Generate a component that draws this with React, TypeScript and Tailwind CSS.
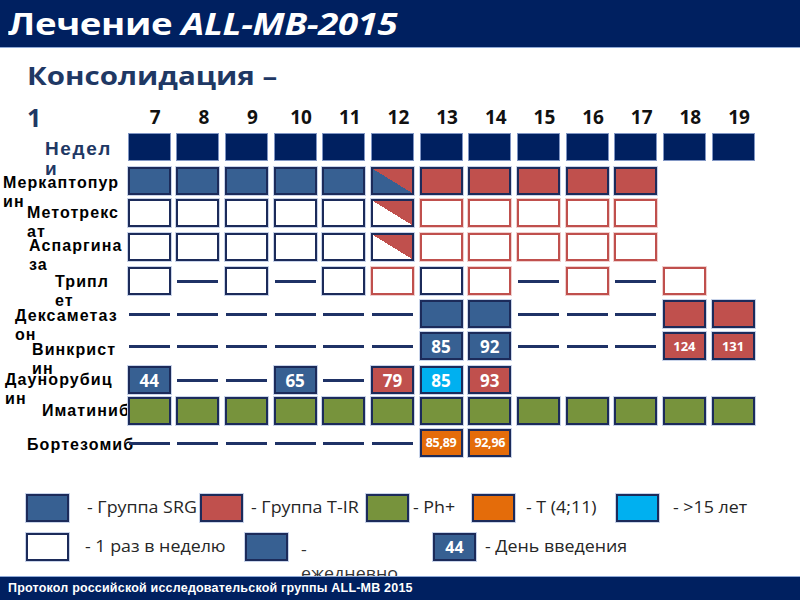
import React from 'react'

const calibri = { fontFamily: '"Open Sans", "Noto Sans", sans-serif' }
const arial = { fontFamily: '"Liberation Sans", Arial, sans-serif' }

type Cell = { t: string; v?: string }

const parse = (s: string): Cell[] =>
  s.split(' ').map((p) => {
    const [t, v] = p.split(':')
    return { t, v }
  })

const rows: { mt: string; label: React.ReactNode; lx: string; ly: string; cells: Cell[] }[] = [
  {
    mt: 'mt-0',
    label: (
      <span className="text-[#1f3864] text-[19px] tracking-[1.6px]">
        Недел
        <br />и
      </span>
    ),
    lx: 'ml-[45px]',
    ly: 'mt-[6px]',
    cells: parse('n n n n n n n n n n n n n'),
  },
  {
    mt: 'mt-[6px]',
    label: (
      <>
        Меркаптопур
        <br />
        ин
      </>
    ),
    lx: 'ml-[3px]',
    ly: 'mt-[6px]',
    cells: parse('b b b b b br r r r r r . .'),
  },
  {
    mt: 'mt-[4px]',
    label: (
      <>
        Метотрекс
        <br />
        ат
      </>
    ),
    lx: 'ml-[27px]',
    ly: 'mt-[4px]',
    cells: parse('w w w w w wd wr wr wr wr wr . .'),
  },
  {
    mt: 'mt-[6px]',
    label: (
      <>
        Аспаргина
        <br />
        за
      </>
    ),
    lx: 'ml-[29px]',
    ly: 'mt-[3px]',
    cells: parse('w w w w w wd wr wr wr wr wr . .'),
  },
  {
    mt: 'mt-[6px]',
    label: (
      <>
        Трипл
        <br />
        ет
      </>
    ),
    lx: 'ml-[55px]',
    ly: 'mt-[5px]',
    cells: parse('w - w - w wr w wr - wr - wr .'),
  },
  {
    mt: 'mt-[5px]',
    label: (
      <>
        Дексаметаз
        <br />
        он
      </>
    ),
    lx: 'ml-[15px]',
    ly: 'mt-[6px]',
    cells: parse('- - - - - - b b - - - r r'),
  },
  {
    mt: 'mt-[4px]',
    label: (
      <>
        Винкрист
        <br />
        ин
      </>
    ),
    lx: 'ml-[32px]',
    ly: 'mt-[8px]',
    cells: parse('- - - - - - b:85 b:92 - - - r:124 r:131'),
  },
  {
    mt: 'mt-[6px]',
    label: (
      <>
        Даунорубиц
        <br />
        ин
      </>
    ),
    lx: 'ml-[5px]',
    ly: 'mt-[4px]',
    cells: parse('b:44 - - b:65 - r:79 c:85 r:93 . . . . .'),
  },
  {
    mt: 'mt-[3px]',
    label: <>Иматиниб</>,
    lx: 'ml-[42px]',
    ly: 'mt-[4px]',
    cells: parse('g g g g g g g g g g g g g'),
  },
  {
    mt: 'mt-[4px]',
    label: <>Бортезомиб</>,
    lx: 'ml-[27px]',
    ly: 'mt-[6px]',
    cells: parse('- - - - - - o:85,89 o:92,96 . . . . .'),
  },
]

const weeks = ['7', '8', '9', '10', '11', '12', '13', '14', '15', '16', '17', '18', '19']

const boxBase =
  'w-[43px] h-[28px] shrink-0 flex items-center justify-center text-white font-bold leading-none'
const edge = 'border-2 border-[#1c2b5a] shadow-[0_0_0_1px_#c9d4ea]'

function Box({ cell }: { cell: Cell }) {
  const { t, v } = cell
  if (t === '.') return <div className="w-[43px] h-[28px] shrink-0" />
  if (t === '-')
    return (
      <div className="w-[43px] h-[28px] shrink-0 flex items-center justify-center">
        <div className="w-[41px] h-[3px] bg-[#1f3266]" />
      </div>
    )
  let cls = ''
  if (t === 'n') cls = 'bg-[#002060] border border-[#8196c4]'
  if (t === 'b') cls = `bg-[#376092] ${edge}`
  if (t === 'r') cls = `bg-[#c0504d] ${edge}`
  if (t === 'g') cls = `bg-[#77933c] ${edge}`
  if (t === 'o') cls = `bg-[#e46c0a] ${edge}`
  if (t === 'c') cls = `bg-[#00b0f0] ${edge}`
  if (t === 'w') cls = `bg-white ${edge}`
  if (t === 'wr') cls = 'bg-white border-2 border-[#c0504d] shadow-[0_0_0_1px_#f0d0cf]'
  if (t === 'br') cls = `bg-[linear-gradient(to_top_right,#376092_50%,#c0504d_50%)] ${edge}`
  if (t === 'wd') cls = `bg-[linear-gradient(to_top_right,#ffffff_50%,#c0504d_50%)] ${edge}`
  const size = v && v.length > 2 ? (v.includes(',') ? 'text-[12.5px] tracking-[-0.3px]' : 'text-[13px]') : 'text-[17px]'
  return (
    <div className={`${boxBase} ${cls} ${size}`} style={calibri}>
      {v}
    </div>
  )
}

function LegendBox({ cls, children }: { cls: string; children?: React.ReactNode }) {
  return (
    <div
      className={`w-[43px] h-[28px] shrink-0 flex items-center justify-center text-white font-bold text-[16px] border-2 border-[#1c2b5a] shadow-[0_0_0_1px_#c9d4ea] ${cls}`}
      style={calibri}
    >
      {children}
    </div>
  )
}

function LegendText({ cls, children }: { cls: string; children: React.ReactNode }) {
  return <div className={`w-fit origin-left scale-x-[1.15] whitespace-nowrap ${cls}`}>{children}</div>
}

export default function App() {
  return (
    <div className="w-[800px] h-[600px] bg-white overflow-hidden flex flex-col">
      <div className="h-[48px] shrink-0 bg-[#002060] border-b border-[#8fa9d6] flex items-center pl-[8px]">
        <h1
          className="origin-left scale-x-[1.22] whitespace-nowrap text-white font-bold text-[30px] leading-none tracking-[-0.3px]"
          style={calibri}
        >
          Лечение <i>ALL-MB-2015</i>
        </h1>
      </div>

      <div
        className="ml-[27px] mt-[7px] h-[41px] w-fit origin-left scale-x-[1.18] whitespace-nowrap text-[#1f3864] font-bold text-[25px] leading-[41px]"
        style={calibri}
      >
        Консолидация –
      </div>

      <div className="flex h-[37px] pt-[6px] gap-[5.67px] items-center" style={calibri}>
        <div className="w-[122px] shrink-0 pl-[27px] text-[#1f3864] font-bold text-[25px] leading-none">1</div>
        {weeks.map((w) => (
          <div key={w} className="w-[43px] shrink-0 pl-[12px] text-center font-bold text-[19px] text-[#111] leading-none">
            {w}
          </div>
        ))}
      </div>

      <div className="flex flex-col">
        {rows.map((r, i) => (
          <div key={i} className={`flex gap-[5.67px] ${r.mt}`}>
            <div className="w-[122px] h-[28px] shrink-0 overflow-visible">
              <div
                className={`${r.lx} ${r.ly} whitespace-nowrap font-bold text-[16px] leading-[19px] tracking-[1.1px] text-black`}
                style={arial}
              >
                {r.label}
              </div>
            </div>
            {r.cells.map((c, j) => (
              <Box key={j} cell={c} />
            ))}
          </div>
        ))}
      </div>

      <div className="mt-[37px] pl-[26px] flex flex-col gap-[11px] text-[15.5px] text-[#262626]" style={calibri}>
        <div className="flex items-center h-[28px]">
          <div className="w-[174px] flex items-center shrink-0">
            <LegendBox cls="bg-[#376092]" />
            <LegendText cls="ml-[18px]">- Группа SRG</LegendText>
          </div>
          <div className="w-[166px] flex items-center shrink-0">
            <LegendBox cls="bg-[#c0504d]" />
            <LegendText cls="ml-[8px]">- Группа T-IR</LegendText>
          </div>
          <div className="w-[106px] flex items-center shrink-0">
            <LegendBox cls="bg-[#77933c]" />
            <LegendText cls="ml-[4px]">- Ph+</LegendText>
          </div>
          <div className="w-[144px] flex items-center shrink-0">
            <LegendBox cls="bg-[#e46c0a]" />
            <LegendText cls="ml-[11px]">- T (4;11)</LegendText>
          </div>
          <div className="flex items-center shrink-0">
            <LegendBox cls="bg-[#00b0f0]" />
            <LegendText cls="ml-[14px]">- &gt;15 лет</LegendText>
          </div>
        </div>
        <div className="flex items-center h-[28px]">
          <div className="w-[219px] flex items-center shrink-0">
            <LegendBox cls="bg-white" />
            <LegendText cls="ml-[16px]">- 1 раз в неделю</LegendText>
          </div>
          <div className="w-[188px] flex items-start shrink-0 h-[28px]">
            <LegendBox cls="bg-[#376092]" />
            <div className="ml-[13px] mt-[4px] leading-[24px] text-[#333]">
              <LegendText cls="">-</LegendText>
              <LegendText cls="">ежедневно</LegendText>
            </div>
          </div>
          <div className="flex items-center shrink-0">
            <LegendBox cls="bg-[#376092]">44</LegendBox>
            <LegendText cls="ml-[9px]">- День введения</LegendText>
          </div>
        </div>
      </div>

      <div className="relative mt-auto h-[24px] shrink-0 bg-[#002060] border-t border-[#8fa9d6] flex items-center pl-[8px]">
        <span className="text-white font-bold text-[12.5px] tracking-[0.2px]" style={arial}>
          Протокол российской исследовательской группы ALL-MB 2015
        </span>
      </div>
    </div>
  )
}
